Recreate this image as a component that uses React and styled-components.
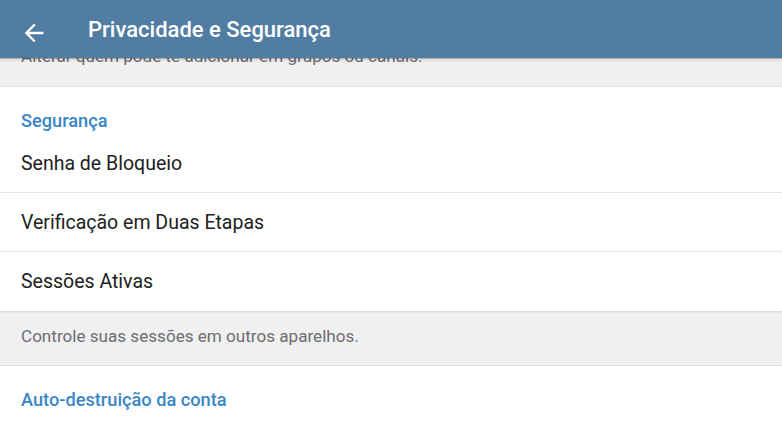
import React from "react";
import styled, { createGlobalStyle } from "styled-components";

const Global = createGlobalStyle`
  html, body { margin: 0; padding: 0; background: #ffffff; }
  body { font-family: Roboto, "Noto Sans", Arial, sans-serif; -webkit-font-smoothing: antialiased; }
  * { box-sizing: border-box; }
`;

const Screen = styled.div`
  width: 782px;
  height: 440px;
  overflow: hidden;
  display: flex;
  flex-direction: column;
  background: #ffffff;
`;

const ActionBar = styled.header`
  position: relative;
  z-index: 2;
  flex: none;
  height: 58px;
  display: flex;
  align-items: center;
  padding-left: 20px;
  gap: 40px;
  background: #527da3;
  box-shadow: 0 1px 0 rgba(0, 0, 0, 0.18), 0 2px 3px rgba(0, 0, 0, 0.12);
`;

const BackButton = styled.button`
  width: 28px;
  height: 28px;
  padding: 0;
  margin-top: 7px;
  border: none;
  background: transparent;
  display: flex;
  color: #ffffff;
  svg { width: 28px; height: 28px; display: block; }
`;

const Title = styled.h1`
  margin: 0;
  padding-top: 2px;
  font-size: 22px;
  line-height: 26px;
  font-weight: 500;
  color: #ffffff;
`;

const Hint = styled.div`
  flex: none;
  background: #f0f0f0;
  color: #6d6d72;
  font-size: 17.1px;
  line-height: 20px;
  padding: ${(p) => (p.$clipped ? "0 21px 21px" : "15px 21px 0")};
  height: ${(p) => p.$height}px;
  display: flex;
  align-items: ${(p) => (p.$clipped ? "flex-end" : "flex-start")};
  overflow: hidden;
  white-space: nowrap;
  box-shadow: inset 0 -1px 0 #e2e2e2 ${(p) => (p.$topShadow ? ", inset 0 1px 0 #dcdcdc, inset 0 2px 0 #e8e8e8" : "")};
`;

const Section = styled.section`
  flex: none;
  background: #ffffff;
  display: flex;
  flex-direction: column;
`;

const SectionTitle = styled.h2`
  margin: 0;
  height: 47px;
  padding: 24px 21px 0;
  font-size: 18.2px;
  line-height: 20px;
  font-weight: 500;
  color: #3a86c5;
`;

const Row = styled.div`
  height: 59px;
  display: flex;
  align-items: center;
  padding: 1px 21px 0;
  font-size: 19.5px;
  line-height: 24px;
  color: #212121;
  &:not(:last-child) { border-bottom: 1px solid #e6e6e6; }
`;

const ArrowBack = () => (
  <svg viewBox="0 0 24 24" fill="currentColor" aria-hidden="true">
    <path d="M20 11H7.83l5.59-5.59L12 4l-8 8 8 8 1.41-1.41L7.83 13H20v-2z" />
  </svg>
);

const rows = ["Senha de Bloqueio", "Verificação em Duas Etapas", "Sessões Ativas"];

export default function App() {
  return (
    <>
      <Global />
      <Screen>
        <ActionBar>
          <BackButton aria-label="Voltar">
            <ArrowBack />
          </BackButton>
          <Title>Privacidade e Segurança</Title>
        </ActionBar>
        <Hint $clipped $height={29}>Alterar quem pode te adicionar em grupos ou canais.</Hint>
        <Section>
          <SectionTitle>Segurança</SectionTitle>
          {rows.map((r) => (
            <Row key={r}>{r}</Row>
          ))}
        </Section>
        <Hint $height={55} $topShadow>Controle suas sessões em outros aparelhos.</Hint>
        <Section>
          <SectionTitle>Auto-destruição da conta</SectionTitle>
        </Section>
      </Screen>
    </>
  );
}
